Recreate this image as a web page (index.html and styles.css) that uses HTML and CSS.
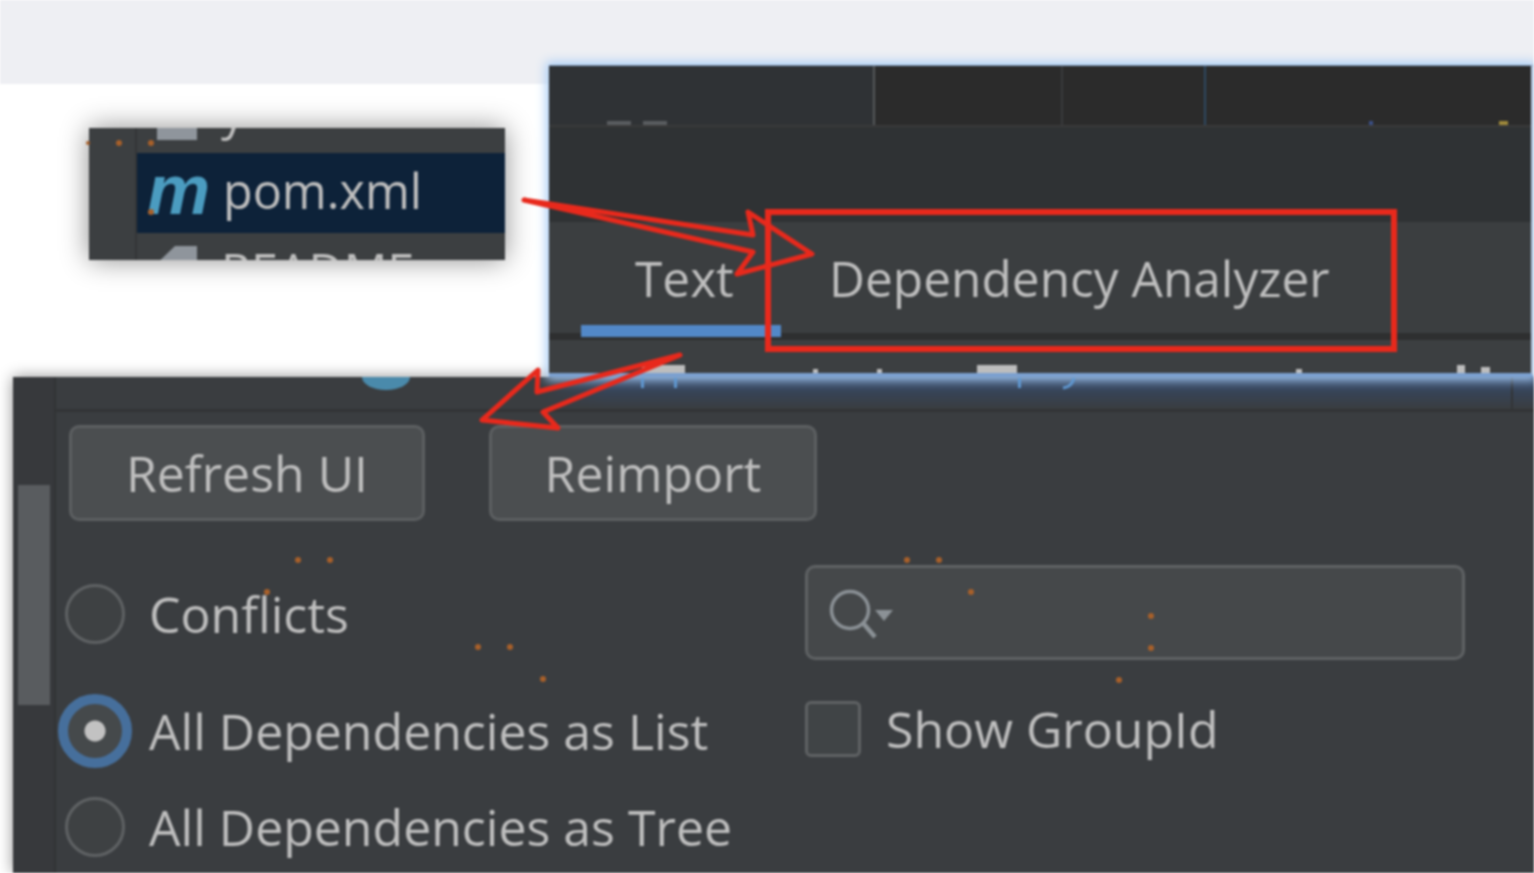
FILE: index.html
```html
<!DOCTYPE html><html lang="en">
<head>
    <meta charset="UTF-8">
    <title>Dependency Analyzer</title>
    <link rel="stylesheet" href="styles.css">
</head>
<body>
<div class="canvas">
    <div class="top-band"></div>

    <!-- project tree crop -->
    <div class="shot tree-shot">
        <div class="tree-gutter"></div>
        <div class="tree-list">
            <div class="tree-row"><span class="file-icon"></span><span class="tree-name">y</span></div>
            <div class="tree-row selected"><span class="maven-icon">m</span><span class="tree-name">pom.xml</span></div>
            <div class="tree-row"><span class="file-icon doc"></span><span class="tree-name">README</span></div>
        </div>
    </div>

    <!-- analyzer panel crop -->
    <div class="shot panel-shot">
        <div class="panel-strip"><div class="scroll-thumb"></div></div>
        <div class="panel-main">
            <div class="panel-head">
                <span class="head-dot"></span>
                <div class="head-select"></div>
            </div>
            <div class="btn-row">
                <button class="btn refresh">Refresh UI</button>
                <button class="btn reimport">Reimport</button>
            </div>
            <div class="form-grid">
                <div class="radio-list">
                    <label class="radio-row"><span class="radio"></span>Conflicts</label>
                    <label class="radio-row second"><span class="radio checked"></span>All Dependencies as List</label>
                    <label class="radio-row third"><span class="radio"></span>All Dependencies as Tree</label>
                </div>
                <div class="side-col">
                    <div class="search">
                        <svg class="search-icon" width="66" height="50" viewBox="0 0 66 50">
                            <circle cx="22" cy="21" r="18.5" fill="none" stroke="#8b9196" stroke-width="3.5"/>
                            <path d="M35 34 L47 48" stroke="#8b9196" stroke-width="4.5" fill="none"/>
                            <path d="M47 21 L65 21 L56 32 Z" fill="#8b9196"/>
                        </svg>
                    </div>
                    <label class="check-row"><span class="checkbox"></span>Show GroupId</label>
                </div>
            </div>
        </div>
    </div>

    <!-- editor crop with tabs -->
    <div class="shot editor-shot">
        <div class="editor-top">
            <div class="editor-left"><i class="dash"></i><i class="dash"></i></div>
            <div class="editor-code">
                <i class="code-line"></i>
                <i class="code-line blue"></i>
            </div>
        </div>
        <div class="editor-band"></div>
        <div class="tabs">
            <div class="tab active">Text</div>
            <div class="tab">Dependency Analyzer</div>
        </div>
        <div class="tabs-foot"></div>
    </div>

    <!-- hand drawn markup plus the bits of neighbouring text the crops cut off -->
    <svg class="markup" width="1534" height="873" viewBox="0 0 1534 873">
        <g fill="#bdbdbd">
            <rect x="642" y="365" width="43" height="8"/>
            <rect x="977" y="365" width="40" height="8"/>
            <rect x="813" y="369" width="5" height="4"/>
            <rect x="877" y="369" width="5" height="4"/>
            <rect x="1296" y="369" width="6" height="4"/>
            <rect x="1457" y="365" width="8" height="8"/>
            <rect x="1481" y="367" width="9" height="6"/>
        </g>
        <g fill="#5f97d0">
            <rect x="641" y="378" width="3" height="10"/>
            <rect x="674" y="378" width="3" height="10"/>
            <rect x="1018" y="378" width="3" height="10"/>
        </g>
        <path d="M1074 378 Q1072 387 1063 388" fill="none" stroke="#5f97d0" stroke-width="3"/>
        <rect x="1369" y="121" width="4" height="4" fill="#3a4f86"/>
        <rect x="1499" y="121" width="9" height="4" fill="#a08a3a"/>
        <g fill="#a8602a">
            <circle cx="88" cy="143" r="2"/>
            <circle cx="119" cy="143" r="3"/>
            <circle cx="151" cy="143" r="3"/>
            <circle cx="151" cy="212" r="3"/>
            <circle cx="298" cy="560" r="3"/>
            <circle cx="330" cy="560" r="3"/>
            <circle cx="267" cy="592" r="3"/>
            <circle cx="478" cy="647" r="3"/>
            <circle cx="510" cy="647" r="3"/>
            <circle cx="543" cy="679" r="3"/>
            <circle cx="907" cy="560" r="3"/>
            <circle cx="939" cy="560" r="3"/>
            <circle cx="971" cy="592" r="3"/>
            <circle cx="1151" cy="616" r="3"/>
            <circle cx="1151" cy="648" r="3"/>
            <circle cx="1119" cy="680" r="3"/>
        </g>
        <rect x="768" y="212" width="626" height="137" fill="none" stroke="#e8291c" stroke-width="6"/>
        <path d="M524 200 L753 235 L748 212 L812 254 L737 274 L753 252 Z" fill="none" stroke="#e8291c" stroke-width="5" stroke-linejoin="round"/>
        <path d="M680 355 L537 392 L538 370 L482 420 L558 428 L543 412 Z" fill="none" stroke="#e8291c" stroke-width="5" stroke-linejoin="round"/>
    </svg>
</div>
</body>
</html>
```

FILE: styles.css
```css
body {
    margin: 0;
    background: #fff;
    overflow: hidden;
}

.canvas {
    position: relative;
    width: 1534px;
    height: 873px;
    overflow: hidden;
    background: #fff;
    font-family: "Open Sans", Arial, sans-serif;
    font-size: 50px;
    color: #bebebe;
    filter: blur(0.9px);
}

.top-band {
    height: 84px;
    background: #eeeff3;
}

.shot {
    position: absolute;
    overflow: hidden;
    box-sizing: border-box;
}

/* tree crop */
.tree-shot {
    left: 89px;
    top: 128px;
    width: 416px;
    height: 132px;
    display: flex;
    background: #3c3f41;
    box-shadow: 0 0 26px rgba(0, 0, 0, 0.45);
}

.tree-gutter {
    width: 46px;
    flex: none;
    border-right: 2px solid #333537;
}

.tree-list {
    flex: 1;
    margin-top: -55px;
}

.tree-row {
    height: 80px;
    display: flex;
    align-items: center;
    padding-left: 10px;
    gap: 14px;
    font-size: 48.5px;
}

.tree-row.selected {
    background: #0d2239;
}

.tree-name {
    margin-top: -6px;
}

.file-icon {
    width: 40px;
    margin: 0 10px;
    height: 54px;
    background: #8f959c;
}

.file-icon.doc {
    clip-path: polygon(0 32%, 45% 0, 100% 0, 100% 100%, 0 100%);
}

.maven-icon {
    width: 62px;
    margin-top: -6px;
    font-family: "Liberation Sans", Arial, sans-serif;
    font-weight: bold;
    font-style: italic;
    font-size: 71px;
    line-height: 70px;
    color: #4b9cc0;
}

/* editor crop */
.editor-shot {
    left: 549px;
    top: 65px;
    width: 985px;
    height: 312px;
    background: #3c3f41;
    border-top: 1px solid #7b95b5;
    border-right: 3px solid #b9cde6;
    border-bottom: 4px solid #7ba0d0;
    box-shadow: 0 0 10px 3px #a9cdf5;
}

.editor-top {
    height: 59px;
    display: flex;
    border-bottom: 2px solid #3a3a3a;
}

.editor-left {
    width: 326px;
    flex: none;
    background: #2f3235;
    border-right: 2px solid #55585a;
    display: flex;
    align-items: flex-end;
    gap: 12px;
    padding-left: 58px;
    box-sizing: border-box;
}

.dash {
    width: 24px;
    height: 4px;
    background: #5a5d60;
}

.editor-code {
    flex: 1;
    background: #2b2b2b;
    display: flex;
    padding-left: 186px;
    gap: 141px;
}

.code-line {
    width: 2px;
    background: #383a3c;
}

.code-line.blue {
    background: #2f4860;
}

.editor-band {
    height: 95px;
    background: #2f3234;
}

.tabs {
    height: 111px;
    display: flex;
    padding-left: 32px;
    background: #3b3e40;
    border-bottom: 7px solid #2e2f30;
    font-size: 49.6px;
}

.tab {
    padding: 29px 0 0 54px;
    box-sizing: border-box;
    line-height: 54px;
    white-space: nowrap;
}

.tab.active {
    width: 200px;
    margin-bottom: -4px;
    border-bottom: 12px solid #5288c8;
}

.tab + .tab {
    padding-left: 48px;
    width: 600px;
}

.tabs-foot {
    height: 33px;
}

/* analyzer crop */
.panel-shot {
    left: 13px;
    top: 377px;
    width: 1521px;
    height: 496px;
    display: flex;
    background: #3a3d40;
    box-shadow: 0 0 14px rgba(0, 0, 0, 0.45);
}

.panel-strip {
    width: 43px;
    flex: none;
    background: #37393c;
    border-right: 2px solid #313335;
    padding: 108px 4px 0 5px;
    box-sizing: border-box;
}

.scroll-thumb {
    height: 220px;
    background: #595c5f;
}

.panel-main {
    flex: 1;
    min-width: 0;
}

.panel-head {
    position: relative;
    height: 32px;
    border-bottom: 3px solid #323436;
    display: flex;
}

.head-dot {
    position: absolute;
    left: 306px;
    top: -13px;
    width: 48px;
    height: 26px;
    border-radius: 50%;
    background: #4a8aab;
}

.head-select {
    position: relative;
    flex: 1;
    margin-left: 480px;
    background:
        linear-gradient(to right, #3a3d40, transparent 70px),
        linear-gradient(#34496a, #3a3d40);
}

.head-select::after {
    content: "";
    position: absolute;
    top: 0;
    bottom: 0;
    left: 975px;
    width: 2px;
    background: #323436;
}

.btn-row {
    display: flex;
    gap: 64px;
    padding: 13px 0 0 13px;
}

.btn {
    height: 96px;
    box-sizing: border-box;
    font: inherit;
    color: inherit;
    background: #4b4e50;
    border: 3px solid #5c5f61;
    border-radius: 10px;
    padding: 0;
}

.refresh {
    width: 356px;
}

.reimport {
    width: 328px;
}

.form-grid {
    display: flex;
    padding-top: 44px;
}

.radio-list {
    width: 749px;
    flex: none;
    padding: 19px 0 0 9px;
    box-sizing: border-box;
}

.radio-row {
    display: flex;
    align-items: center;
    gap: 24px;
    height: 60px;
    white-space: nowrap;
}

.radio-row.second {
    margin-top: 57px;
}

.radio-row.third {
    margin-top: 36px;
}

.radio {
    width: 60px;
    height: 60px;
    flex: none;
    box-sizing: border-box;
    border: 3px solid #5f6264;
    border-radius: 50%;
    background: #3e4143;
}

.radio.checked {
    width: 74px;
    height: 74px;
    margin: 0 -7px;
    border: 10px solid #466f9c;
    background: radial-gradient(circle, #c2c2c2 0 10px, #45494b 11px);
}

.side-col {
    flex: 1;
}

.search {
    width: 660px;
    height: 95px;
    box-sizing: border-box;
    background: #45484a;
    border: 3px solid #5f6264;
    border-radius: 10px;
    padding: 21px 0 0 20px;
}

.search-icon {
    display: block;
}

.check-row {
    display: flex;
    align-items: center;
    gap: 25px;
    margin-top: 41px;
    height: 56px;
    white-space: nowrap;
}

.checkbox {
    width: 56px;
    height: 56px;
    flex: none;
    box-sizing: border-box;
    border: 3px solid #5f6264;
    border-radius: 6px;
    background: #404446;
}

.markup {
    position: absolute;
    left: 0;
    top: 0;
}
```
